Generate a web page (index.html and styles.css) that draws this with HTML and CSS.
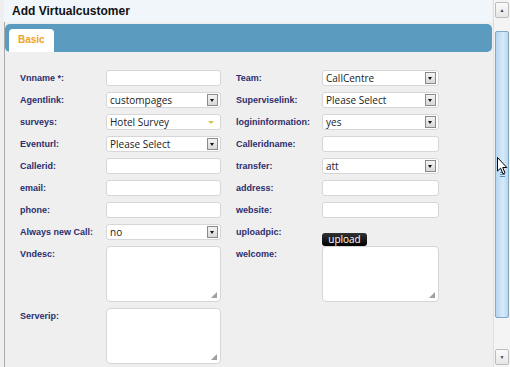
FILE: index.html
```html
<!DOCTYPE html>
<html lang="en">
<head>
  <meta charset="UTF-8" />
  <title>Add Virtualcustomer</title>
  <link rel="stylesheet" href="styles.css">
</head>
<body>
  <div class="window">
    <div class="panel">
      <div class="titlebar">Add Virtualcustomer</div>

      <div class="tabs">
        <span class="tab">Basic</span>
      </div>

      <form class="form">
        <label>Vnname *:</label>
        <span class="field"></span>
        <label class="right">Team:</label>
        <span class="field select">CallCentre<i class="arrow"></i></span>

        <label>Agentlink:</label>
        <span class="field select">custompages<i class="arrow"></i></span>
        <label class="right">Superviselink:</label>
        <span class="field select">Please Select<i class="arrow"></i></span>

        <label>surveys:</label>
        <span class="field select">Hotel Survey<i class="tri"></i></span>
        <label class="right">logininformation:</label>
        <span class="field select">yes<i class="arrow"></i></span>

        <label>Eventurl:</label>
        <span class="field select">Please Select<i class="arrow"></i></span>
        <label class="right">Calleridname:</label>
        <span class="field"></span>

        <label>Callerid:</label>
        <span class="field"></span>
        <label class="right">transfer:</label>
        <span class="field select">att<i class="arrow"></i></span>

        <label>email:</label>
        <span class="field"></span>
        <label class="right">address:</label>
        <span class="field"></span>

        <label>phone:</label>
        <span class="field"></span>
        <label class="right">website:</label>
        <span class="field"></span>

        <label>Always new Call:</label>
        <span class="field select">no<i class="arrow"></i></span>
        <label class="right">uploadpic:</label>
        <span class="upload-cell"><button type="button" class="upload">upload</button></span>

        <label class="top">Vndesc:</label>
        <span class="area"><i class="grip"></i></span>
        <label class="top right">welcome:</label>
        <span class="area"><i class="grip"></i></span>

        <label class="top">Serverip:</label>
        <span class="area"><i class="grip"></i></span>
      </form>
    </div>

    <div class="scrollbar">
      <span class="sb-btn">&#9650;</span>
      <span class="sb-track">
        <span class="sb-thumb"><i class="sb-grip"></i></span>
      </span>
      <span class="sb-btn">&#9660;</span>
    </div>

    <svg class="cursor" width="11" height="18" viewBox="0 0 11 18">
      <path d="M0.5 0.5 L0.5 14 L3.6 11.2 L6 16.8 L8 15.9 L5.7 10.5 L9.8 10.5 Z" fill="#fff" stroke="#000" stroke-width="1" stroke-linejoin="round"/>
    </svg>
  </div>
</body>
</html>
```

FILE: styles.css
```css
html, body {
  margin: 0;
  height: 100%;
}
body {
  background-color: #efefef;
  font-family: "Open Sans", sans-serif;
  overflow: hidden;
}
.window {
  position: relative;
  display: flex;
  height: 367px;
}
.panel {
  flex: 1;
  margin-left: 4px;
  border-left: 1px solid #a9a9a9;
  background-color: #efefef;
}
.titlebar {
  height: 22px;
  line-height: 22px;
  margin-left: -1px;
  padding-left: 8px;
  background-color: #f1f6fb;
  font-family: "Liberation Sans", sans-serif;
  font-weight: bold;
  font-size: 12px;
  color: #111;
}
.tabs {
  margin-top: 2px;
  height: 28px;
  background-color: #5b9bbf;
  border-radius: 5px;
  padding: 5px 0 0 4px;
  box-sizing: border-box;
  display: flex;
  align-items: flex-end;
}
.tab {
  width: 45px;
  height: 23px;
  line-height: 22px;
  background: #fff;
  border-radius: 4px 4px 0 0;
  color: #eea321;
  font-family: "Liberation Sans", sans-serif;
  font-weight: bold;
  font-size: 10px;
  padding-left: 9px;
  box-sizing: border-box;
}
.form {
  display: grid;
  grid-template-columns: 86px 115px 101px 117px;
  grid-template-rows: repeat(8, 16px) 56px 56px;
  row-gap: 6px;
  padding: 18px 0 0 15px;
  align-items: center;
}
.form label {
  font-family: "Liberation Sans", sans-serif;
  font-weight: bold;
  font-size: 9px;
  color: #2d2e6e;
  white-space: nowrap;
}
.form label.right {
  padding-left: 15px;
}
.form label.top {
  align-self: start;
  margin-top: 3px;
}
.field {
  position: relative;
  height: 16px;
  background: #fff;
  border: 1px solid #d6d6d6;
  border-radius: 3px;
  box-sizing: border-box;
  font-size: 10px;
  line-height: 14px;
  padding-left: 3px;
  color: #222;
}
.arrow {
  position: absolute;
  right: 2px;
  top: 1px;
  width: 11px;
  height: 12px;
  box-sizing: border-box;
  border: 1px solid #8a8a8a;
  background: linear-gradient(#f4f4f4, #d8d8d8);
}
.arrow::after {
  content: "";
  position: absolute;
  left: 2px;
  top: 4px;
  border-left: 2.5px solid transparent;
  border-right: 2.5px solid transparent;
  border-top: 3px solid #111;
}
.tri {
  position: absolute;
  right: 6px;
  top: 6px;
  border-left: 3px solid transparent;
  border-right: 3px solid transparent;
  border-top: 3px solid #c9c94a;
}
.upload-cell {
  align-self: start;
}
.upload {
  display: block;
  margin-top: 9px;
  width: 45px;
  height: 13px;
  padding: 0;
  border: none;
  border-radius: 3px;
  background: linear-gradient(#333, #000);
  color: #fff;
  font-family: "Open Sans", sans-serif;
  font-size: 10px;
  line-height: 13px;
}
.area {
  align-self: stretch;
  position: relative;
  background: #fff;
  border: 1px solid #d6d6d6;
  border-radius: 4px;
  box-sizing: border-box;
}
.grip {
  position: absolute;
  right: 3px;
  bottom: 3px;
  width: 6px;
  height: 6px;
  background-image: radial-gradient(circle, #999 0.7px, transparent 0.8px);
  background-size: 2px 2px;
  clip-path: polygon(100% 0, 100% 100%, 0 100%);
}
.scrollbar {
  width: 16px;
  margin-left: 1px;
  display: flex;
  flex-direction: column;
  background: #f4f4f4;
  border-left: 1px solid #e0e0e0;
}
.sb-btn {
  height: 14px;
  margin: 2px 1px;
  border: 1px solid #bcbcbc;
  border-radius: 2px;
  background: linear-gradient(#fbfbfb, #e6e6e6);
  font-size: 5px;
  line-height: 14px;
  text-align: center;
  color: #444;
}
.sb-track {
  flex: 1;
}
.sb-thumb {
  display: flex;
  align-items: center;
  justify-content: center;
  height: 285px;
  margin: 11px 1px 0 1px;
  border: 1px solid #7fa7c8;
  border-radius: 2px;
  background: linear-gradient(to right, #b6d6f0, #d8eafa 60%, #b8d6ee);
}
.sb-grip {
  width: 5px;
  height: 5px;
  background: repeating-linear-gradient(#5d88ad 0 1px, transparent 1px 2px);
}
.cursor {
  position: absolute;
  left: 497px;
  top: 157px;
}
```
